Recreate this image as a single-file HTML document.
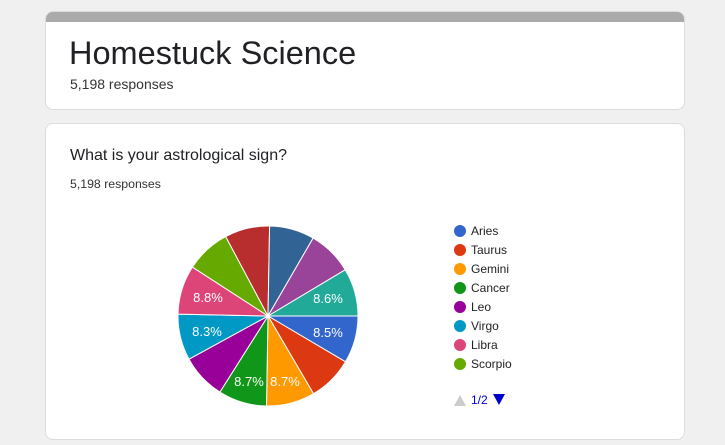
<!DOCTYPE html>
<html><head><meta charset="utf-8"><style>
body{margin:0;width:725px;height:445px;background:#f0f0f0;font-family:"Liberation Sans",Arial,sans-serif;position:relative;overflow:hidden}
.card{position:absolute;left:45px;width:640px;background:#fff;border:1px solid #dadce0;border-radius:8px;box-sizing:border-box}
#c1{top:11px;height:99px;overflow:hidden}
#c1 .bar{height:10px;background:#aaaaaa}
#c2{top:123px;height:317px}
.t{position:absolute;color:#202124;white-space:nowrap}
</style></head><body>
<div class="card" id="c1"><div class="bar"></div>
<div class="t" style="left:23px;top:23px;font-size:32.5px;">Homestuck Science</div>
<div class="t" style="left:24px;top:64px;font-size:14px;color:#333">5,198 responses</div>
</div>
<div class="card" id="c2">
<div class="t" style="left:24px;top:23px;font-size:16px;">What is your astrological sign?</div>
<div class="t" style="left:24px;top:53px;font-size:12.3px;color:#333">5,198 responses</div>
</div>
<svg style="position:absolute;left:0;top:0" width="725" height="445">
<g stroke="#fff" stroke-width="1">
<path d="M268 316L358 316A90 90 0 0 1 345.5 361.8Z" fill="#3366cc"/>
<path d="M268 316L345.5 361.8A90 90 0 0 1 313.5 393.7Z" fill="#dc3912"/>
<path d="M268 316L313.5 393.7A90 90 0 0 1 266.5 406Z" fill="#ff9900"/>
<path d="M268 316L266.5 406A90 90 0 0 1 219.9 392.1Z" fill="#109618"/>
<path d="M268 316L219.9 392.1A90 90 0 0 1 189 359.2Z" fill="#990099"/>
<path d="M268 316L189 359.2A90 90 0 0 1 178 314.1Z" fill="#0099c6"/>
<path d="M268 316L178 314.1A90 90 0 0 1 192.4 267.1Z" fill="#dd4477"/>
<path d="M268 316L192.4 267.1A90 90 0 0 1 225.7 236.6Z" fill="#66aa00"/>
<path d="M268 316L225.7 236.6A90 90 0 0 1 269.6 226Z" fill="#b82e2e"/>
<path d="M268 316L269.6 226A90 90 0 0 1 313.1 238.1Z" fill="#316395"/>
<path d="M268 316L313.1 238.1A90 90 0 0 1 345.2 269.8Z" fill="#994499"/>
<path d="M268 316L345.2 269.8A90 90 0 0 1 358 316Z" fill="#22aa99"/>
</g>
<g fill="#fff" font-size="13" text-anchor="middle" font-family="Liberation Sans,Arial,sans-serif">
<text x="328" y="337">8.5%</text><text x="328" y="303">8.6%</text>
<text x="285" y="386">8.7%</text><text x="249" y="386">8.7%</text>
<text x="207" y="336">8.3%</text><text x="208" y="302">8.8%</text>
</g>
<g font-size="12" fill="#222" font-family="Liberation Sans,Arial,sans-serif">
<circle cx="460" cy="231" r="6" fill="#3366cc"/><text x="471" y="235">Aries</text>
<circle cx="460" cy="250" r="6" fill="#dc3912"/><text x="471" y="254">Taurus</text>
<circle cx="460" cy="269" r="6" fill="#ff9900"/><text x="471" y="273">Gemini</text>
<circle cx="460" cy="288" r="6" fill="#109618"/><text x="471" y="292">Cancer</text>
<circle cx="460" cy="307" r="6" fill="#990099"/><text x="471" y="311">Leo</text>
<circle cx="460" cy="326" r="6" fill="#0099c6"/><text x="471" y="330">Virgo</text>
<circle cx="460" cy="345" r="6" fill="#dd4477"/><text x="471" y="349">Libra</text>
<circle cx="460" cy="364" r="6" fill="#66aa00"/><text x="471" y="368">Scorpio</text>
<path d="M454 406L460 395L466 406Z" fill="#cccccc"/>
<text x="471" y="404" fill="#0000cc">1/2</text>
<path d="M493 394L505 394L499 405Z" fill="#0000cc"/>
</g>
</svg>
</body></html>
